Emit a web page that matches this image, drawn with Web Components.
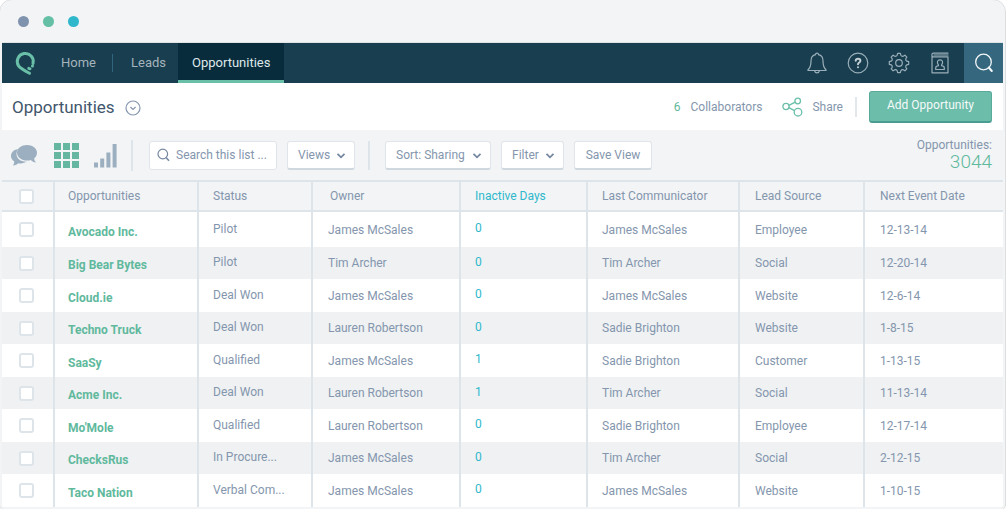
<!DOCTYPE html>
<html lang="en">
<head>
<meta charset="utf-8">
<title>Opportunities</title>
<style>
  :root {
    --green: #5fb99d;
    --teal: #2fb8cb;
    --slate: #8496ad;
    --panel: #f2f4f6;
    --line: #dde4ea;
  }
  body { margin: 0; background: #fff; font: 12px/16px Roboto, sans-serif; color: var(--slate); }
</style>
</head>
<body>
<app-window>
  <top-nav>
    <nav-item href="#home">Home</nav-item>
    <nav-item href="#leads" divided>Leads</nav-item>
    <nav-item href="#opportunities" active>Opportunities</nav-item>
  </top-nav>
  <page-header count="6">Opportunities</page-header>
  <list-toolbar total="3044"></list-toolbar>
  <opportunity-table></opportunity-table>
</app-window>

<script>
const define = (name, html, setup) => {
  const template = document.createElement('template');
  template.innerHTML = '<style>*{box-sizing:border-box}svg{display:block;fill:none}button,select,input{font:inherit;color:inherit;margin:0}</style>' + html;
  customElements.define(name, class extends HTMLElement {
    connectedCallback() {
      if (this.shadowRoot) return;
      const root = this.attachShadow({ mode: 'open' });
      root.append(template.content.cloneNode(true));
      if (setup) setup(root, this);
    }
  });
};

/* Browser-like frame around the application */
define('app-window', `
<style>
  :host { display: block; border: solid #f3f4f5; border-width: 0 2px 2px; border-radius: 12px 12px 4px 4px; overflow: hidden; box-shadow: inset 0 1px #e8eaec; margin-right: 1px; outline: 1px solid #dcdee0; }
  .bar { display: flex; align-items: center; gap: 14px; height: 43px; padding-left: 16px; background: var(--panel); border-bottom: 1px solid #dfe4e7; }
  i { width: 11px; height: 11px; border-radius: 50%; background: #8093ae; }
  i:nth-child(2) { background: #64bfa5; }
  i:nth-child(3) { background: #2fb8cb; }
</style>
<div class="bar"><i></i><i></i><i></i></div>
<slot></slot>`);

define('nav-item', `
<style>
  :host { display: flex; align-items: center; }
  a { display: flex; align-items: center; height: 40px; padding: 0 16px 1px 17px; font-size: 13px; color: #a5b4bc; text-decoration: none; }
  :host([divided])::before { content: ""; width: 1px; height: 18px; background: #2f657e; }
  :host([divided]) a { padding-left: 18px; padding-right: 12px; }
  :host([active]) a { padding: 2px 14px 0; color: #dfe8ea; background: #082c3c; border-bottom: 3px solid #6abfa9; }
</style>
<a><slot></slot></a>`, (root, host) => {
  root.querySelector('a').href = host.getAttribute('href');
});

define('top-nav', `
<style>
  :host { display: flex; height: 40px; background: #183e4f; }
  .logo { margin: 8px 8px 0 12px; }
  nav { display: flex; flex: 1; }
  .tools { display: flex; align-items: center; gap: 19px; }
  button { display: grid; place-items: center; padding: 0; border: 0; background: none; color: #9aafb9; width: 22px; height: 40px; }
  .search { width: 39px; background: #35687f; color: #f2f7f8; margin-left: -6px; }
  svg { stroke: currentColor; stroke-width: 1.2; stroke-linecap: round; stroke-linejoin: round; }
</style>
<a class="logo" href="#home" aria-label="Home page"><svg width="22" height="25" viewBox="0 0 22 25" style="stroke:#6abfa9;stroke-width:3"><path d="M15.500 22.200C11 19.800 7 17.500 4.600 14.900A8 8 0 1 1 19 12.500"/><path d="M18.400 15h.1M14.800 17.400l1.200.4"/></svg></a>
<nav><slot></slot></nav>
<div class="tools">
  <button aria-label="Notifications"><svg width="22" height="22" viewBox="0 0 22 22"><path d="M11 1.200c-1 0-1.500.6-1.500 1.500C6.500 3.300 5 5.700 5 9c0 4.500-1 7-3 8.700V18.500h18v-.8c-2-1.700-3-4.200-3-8.700 0-3.300-1.500-5.700-4.500-6.300 0-.9-.5-1.500-1.500-1.500zM8.500 18.700c.3 1.600 1.200 2.200 2.500 2.200s2.200-.6 2.500-2.200"/></svg></button>
  <button aria-label="Help"><svg width="22" height="22" viewBox="0 0 22 22"><circle cx="11" cy="11" r="9.800"/><path stroke-width="2" stroke="#c4d0d5" d="M8.700 8.700c.2-1.400 1.100-2 2.300-2 1.400 0 2.400.7 2.400 2 0 1.700-2.400 1.800-2.400 3.600M11 15.200v.1"/></svg></button>
  <button aria-label="Settings"><svg class="gear" width="22" height="22" viewBox="0 0 22 22"><circle cx="11" cy="11" r="3.300"/><path/></svg></button>
  <button aria-label="Contacts"><svg width="22" height="22" viewBox="0 0 22 22"><path d="M19 1.200H4.500C2.300 1.200 2.300 4.800 4.500 4.800H19V20.800H3V3M5 3h14"/><path d="M6.700 17.500v-1.600c0-1.200 1-1.900 2.700-2.200v-.8c-1.900-2.700-1-5.100 1.600-5.100s3.500 2.400 1.600 5.100v.8c1.700.3 2.700 1 2.700 2.200v1.600z"/></svg></button>
  <button class="search" aria-label="Search"><svg width="20" height="20" viewBox="0 0 20 20" style="stroke-width:1.300"><circle cx="9.500" cy="9" r="7.800"/><path d="M14.800 14.500l3 3.500" stroke-width="2"/></svg></button>
</div>`, root => {
  const pts = [];
  for (let i = 0; i < 8; i++) {
    const at = (r, deg) => { const a = (i * 45 + deg - 90) * Math.PI / 180; return (11 + r * Math.cos(a)).toFixed(2) + ' ' + (11 + r * Math.sin(a)).toFixed(2); };
    pts.push((i ? 'L' : 'M') + at(9.8, -8), 'L' + at(9.8, 8), 'L' + at(8, 13), 'Q' + at(7, 22.5) + ' ' + at(8, 32));
  }
  root.querySelector('.gear path').setAttribute('d', pts.join('') + 'Z');
});

define('page-header', `
<style>
  :host { display: flex; align-items: center; height: 47px; padding: 0 11px 0 10px; background: #fff; }
  h1 { margin: 0 10px 0 0; font-size: 17px; font-weight: 400; line-height: 24px; color: #42566c; padding-top: 1px; }
  button, a { border: 0; padding: 0; background: none; }
  .more { color: var(--slate); margin-top: 2px; }
  .side { display: flex; align-items: center; margin-left: auto; }
  a { color: inherit; text-decoration: none; }
  .count { color: var(--green); margin-right: 10px; }
  .share { display: flex; align-items: center; gap: 9px; margin-left: 20px; padding-right: 12px; border-right: 2px solid #e4e7ea; height: 20px; }
  .add { width: 123px; height: 32px; margin-left: 12px; padding-bottom: 2px; border: 1px solid #58aa9b; border-bottom: 2px solid #4b9d92; border-radius: 3px; background: #6dbdab; color: #f4faf8; }
</style>
<h1><slot></slot></h1>
<button class="more" aria-label="More lists"><svg width="16" height="16" viewBox="0 0 16 16" stroke="currentColor" stroke-width="1.200"><circle cx="8" cy="8" r="7"/><path d="M5.400 7l2.600 2.400L10.600 7"/></svg></button>
<div class="side">
  <a href="#collaborators"><span class="count"></span>Collaborators</a>
  <a class="share" href="#share"><svg width="21" height="20" viewBox="0 0 21 20" stroke="#6abfa9" stroke-width="1.300"><circle cx="4" cy="9.500" r="3.100"/><circle cx="15.700" cy="4" r="2.800"/><circle cx="16" cy="15.200" r="3.800"/><path d="M6.900 8.300l6.200-3.100M6.900 10.700l5.600 2.900"/></svg>Share</a>
  <button class="add">Add Opportunity</button>
</div>`, (root, host) => {
  root.querySelector('.count').textContent = host.getAttribute('count');
});

define('drop-down', `
<style>
  :host { display: block; position: relative; }
  select { appearance: none; display: block; height: 29px; padding: 0 24px 0 10px; border: 1px solid #dfe5ea; border-bottom: 2px solid #cfd7df; border-radius: 3px; background: #fff; width: 100%; }
  svg { position: absolute; right: 9px; top: 11px; pointer-events: none; }
</style>
<select><option></option></select>
<svg width="10" height="8" viewBox="0 0 10 8" stroke="#75889f" stroke-width="1.800"><path d="M1.500 1.800L5 5.300l3.500-3.500"/></svg>`, (root, host) => {
  root.querySelector('option').textContent = host.getAttribute('label');
  root.querySelector('select').setAttribute('aria-label', host.getAttribute('label'));
});

define('list-toolbar', `
<style>
  :host { display: flex; align-items: center; height: 50px; padding: 0 11px 0 9px; background: var(--panel); }
  .modes { display: flex; align-items: center; gap: 15px; padding-right: 13px; height: 31px; border-right: 2px solid var(--line); }
  .modes button { padding: 0; border: 0; background: none; }
  .search { display: flex; align-items: center; gap: 6px; width: 128px; height: 29px; margin: 0 10px 0 16px; padding-left: 7px; border: 1px solid #dfe5ea; border-radius: 3px; background: #fff; }
  input { flex: 1; min-width: 0; padding: 0; border: 0; outline: 0; background: none; }
  input::placeholder { color: var(--slate); opacity: 1; }
  .views { width: 68px; }
  .filters { display: flex; gap: 10px; margin-left: 13px; padding-left: 15px; border-left: 2px solid var(--line); }
  .sort { width: 106px; }
  .filter { width: 63px; }
  .save { width: 78px; height: 29px; padding: 0; border: 1px solid #dfe5ea; border-bottom: 2px solid #cfd7df; border-radius: 3px; background: #fff; }
  .total { margin-left: auto; padding-bottom: 3px; text-align: right; }
  .total b { display: block; font-size: 19px; line-height: 18px; font-weight: 300; color: var(--green); }
</style>
<div class="modes">
  <button aria-label="Conversation view"><svg width="28" height="24" viewBox="2 0 28 24"><path fill="#9cafc0" d="M9 6C4 7 2 10 2 13c0 2 1 4 3.200 5.500 0 1.700-.4 2.700-1.200 4 2.500-.3 4.200-1.200 5.400-2.300 3 .5 6.200 0 8.400-1.600-5.600.4-10.300-2.800-10.300-7.600 0-1.900.5-3.500 1.500-5z"/><path fill="#9cafc0" d="M18 2c-5.500 0-10 3.300-10 7.700s4.500 7.800 10 7.800c1.400 0 2.700-.2 3.800-.6 1.300 1.500 3 2.400 5.100 2.500-1.300-1.300-1.700-2.600-1.700-4.100 1.800-1.400 2.800-3.400 2.800-5.600C28 5.300 23.500 2 18 2z"/></svg></button>
  <button aria-label="Grid view"><svg width="25" height="25" viewBox="0 0 25 25"><path stroke="#65b7a1" stroke-width="7" stroke-dasharray="7 2" d="M0 3.500h25M0 12.500h25M0 21.500h25"/></svg></button>
  <button aria-label="Chart view"><svg width="24" height="25" viewBox="1 0 24 25"><path fill="#9cafc0" d="M1 19.500h4V24.500H1zM7.200 15.500h4v9h-4zM13.400 9.500h4v15h-4zM19.600 1h4v23.500h-4z"/></svg></button>
</div>
<label class="search"><svg width="13" height="14" viewBox="0 0 13 14" stroke="#75889f" stroke-width="1.200"><circle cx="5.800" cy="6" r="4.800"/><path d="M9.200 9.700l2.800 3" stroke-width="1.600"/></svg><input type="text" placeholder="Search this list ..." aria-label="Search this list"></label>
<drop-down class="views" label="Views"></drop-down>
<div class="filters">
  <drop-down class="sort" label="Sort: Sharing"></drop-down>
  <drop-down class="filter" label="Filter"></drop-down>
  <button class="save">Save View</button>
</div>
<div class="total">Opportunities:<b></b></div>`, (root, host) => {
  root.querySelector('b').textContent = host.getAttribute('total');
});

const opportunities = [
  ['Avocado Inc.', 'Pilot', 'James McSales', '0', 'James McSales', 'Employee', '12-13-14'],
  ['Big Bear Bytes', 'Pilot', 'Tim Archer', '0', 'Tim Archer', 'Social', '12-20-14'],
  ['Cloud.ie', 'Deal Won', 'James McSales', '0', 'James McSales', 'Website', '12-6-14'],
  ['Techno Truck', 'Deal Won', 'Lauren Robertson', '0', 'Sadie Brighton', 'Website', '1-8-15'],
  ['SaaSy', 'Qualified', 'James McSales', '1', 'Sadie Brighton', 'Customer', '1-13-15'],
  ['Acme Inc.', 'Deal Won', 'Lauren Robertson', '1', 'Tim Archer', 'Social', '11-13-14'],
  ["Mo'Mole", 'Qualified', 'Lauren Robertson', '0', 'Sadie Brighton', 'Employee', '12-17-14'],
  ['ChecksRus', 'In Procure...', 'James McSales', '0', 'Tim Archer', 'Social', '2-12-15'],
  ['Taco Nation', 'Verbal Com...', 'James McSales', '0', 'James McSales', 'Website', '1-10-15']
];

define('opportunity-table', `
<style>
  :host { display: block; }
  table { width: 100%; table-layout: fixed; border-collapse: separate; border-spacing: 0; }
  th, td { padding: 0 0 0 14px; text-align: left; font-weight: 400; border-right: 2px solid var(--line); white-space: nowrap; overflow: hidden; }
  th:last-child, td:last-child { border-right: 0; }
  th { height: 32px; border-top: 2px solid var(--line); border-bottom: 2px solid var(--line); background: var(--panel); }
  td { height: 33px; }
  tbody tr:first-child td { height: 35px; }
  tbody tr:nth-child(even) td { height: 32px; background: #eff1f3; }
  th:first-child, td:first-child { padding-left: 17px; }
  th:nth-child(2), td:nth-child(2) { padding-left: 13px; }
  td:nth-child(2) { padding-top: 4px; }
  td:nth-child(3) { padding-bottom: 2px; }
  th:nth-child(4) { padding-left: 17px; }
  td:nth-child(4) { padding-left: 15px; }
  td:nth-child(5) { padding-bottom: 3px; }
  th:nth-child(5), td:nth-child(5) { color: var(--teal); }
  th:nth-child(7), td:nth-child(7), th:nth-child(8), td:nth-child(8) { padding-left: 15px; }
  td a { color: var(--green); font-weight: 700; text-decoration: none; }
  input { appearance: none; display: block; width: 15px; height: 15px; border: 2px solid var(--line); border-radius: 3px; background: #fff; }
</style>
<table>
  <colgroup><col style="width:53px"><col style="width:144px"><col style="width:114px"><col style="width:148px"><col style="width:127px"><col style="width:152px"><col style="width:125px"><col style="width:138px"></colgroup>
  <thead><tr><th><input type="checkbox" aria-label="Select all"></th><th>Opportunities</th><th>Status</th><th>Owner</th><th>Inactive Days</th><th>Last Communicator</th><th>Lead Source</th><th>Next Event Date</th></tr></thead>
  <tbody></tbody>
</table>`, root => {
  root.querySelector('tbody').innerHTML = opportunities.map(([name, ...rest]) =>
    `<tr><td><input type="checkbox" aria-label="Select ${name}"></td><td><a href="#opportunity">${name}</a></td>${rest.map(v => `<td>${v}</td>`).join('')}</tr>`).join('');
});
</script>
</body>
</html>
